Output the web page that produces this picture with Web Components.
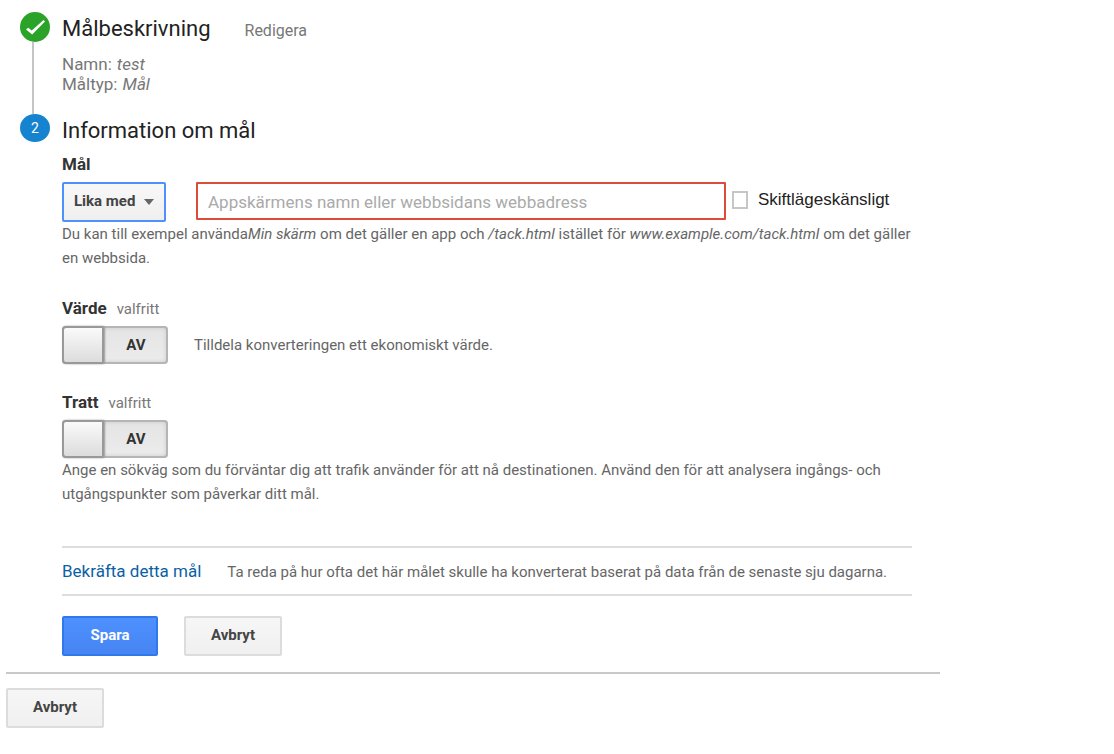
<!DOCTYPE html>
<html lang="sv">
<head>
<meta charset="utf-8">
<meta name="viewport" content="width=device-width, initial-scale=1">
<title>Information om mål</title>
<style>
  body {
    margin: 0;
    padding: 12px 6px;
    background: #fff;
    color: #666;
    font-family: Roboto, "Liberation Sans", sans-serif;
    font-size: 15px;
    line-height: 24px;
  }
</style>
</head>
<body>
<goal-wizard></goal-wizard>

<script>
class GoalStep extends HTMLElement {
  constructor() {
    super();
    this.attachShadow({mode: 'open'});
  }

  connectedCallback() {
    const done = this.hasAttribute('done');
    const tick = `
      <svg viewBox="0 0 30 30" width="30" height="30" role="img" aria-label="Klart">
        <path d="M6 17.500L8.200 15.800L11.800 18.600L23.500 8L25 9.500L12.200 22.600z" fill="#fff"/>
      </svg>`;
    this.shadowRoot.innerHTML = `
      <style>
        :host {
          display: grid;
          grid-template-columns: 30px minmax(0, 850px);
          column-gap: 12px;
          padding: 0 14px;
        }
        .rail {
          display: flex;
          flex-direction: column;
        }
        .marker {
          display: flex;
          align-items: center;
          justify-content: center;
          height: 28px;
          border-radius: 50%;
          background: #1583d0;
          color: #fff;
          font-size: 14px;
        }
        .marker.done {
          height: 30px;
          background: #2ba228;
        }
        .line {
          flex: 1;
          width: 2px;
          margin-left: 12px;
          background: #c4c4c4;
        }
        header {
          display: flex;
          align-items: baseline;
          gap: 34px;
        }
        h2 {
          margin: 0;
          color: #222;
          font-size: 22px;
          font-weight: 400;
          line-height: 34px;
        }
      </style>
      <div class="rail">
        <div class="marker ${done ? 'done' : ''}">${done ? tick : this.getAttribute('number')}</div>
        ${done ? '<div class="line"></div>' : ''}
      </div>
      <section>
        <header>
          <h2>${this.getAttribute('heading')}</h2>
          <slot name="action"></slot>
        </header>
        <slot></slot>
      </section>
    `;
  }
}
customElements.define('goal-step', GoalStep);

class GoalTarget extends HTMLElement {
  constructor() {
    super();
    this.attachShadow({mode: 'open'}).innerHTML = `
      <style>
        * {
          box-sizing: border-box;
        }
        :host {
          display: block;
        }
        .title {
          display: block;
          margin-bottom: 8px;
          color: #333;
          font-size: 17px;
          font-weight: 700;
          line-height: 20px;
        }
        .row {
          display: flex;
          align-items: flex-start;
        }
        .select {
          display: grid;
          flex: none;
          align-items: center;
          width: 104px;
          margin-right: 30px;
        }
        .select > * {
          grid-area: 1 / 1;
        }
        select {
          appearance: none;
          width: 100%;
          height: 40px;
          padding: 0 10px 2px;
          border: 2px solid #4d90fe;
          border-radius: 2px;
          background: linear-gradient(#f8f8f8, #efefef);
          color: #444;
          font: 700 15px Roboto, sans-serif;
        }
        svg {
          justify-self: end;
          margin-right: 12px;
          pointer-events: none;
        }
        input[type="text"] {
          flex: 0 1 530px;
          min-width: 0;
          height: 38px;
          padding: 2px 10px 0;
          border: 2px solid #dd4b39;
          border-radius: 1px;
          font: 17px Roboto, sans-serif;
        }
        input::placeholder {
          color: #aaa;
        }
        .case {
          display: flex;
          align-items: center;
          gap: 10px;
          height: 36px;
          margin-left: 6px;
          color: #222;
          font: 17px "Liberation Sans", sans-serif;
        }
        input[type="checkbox"] {
          appearance: none;
          width: 16px;
          height: 18px;
          margin: 0;
          border: 2px solid #c6c6c6;
        }
      </style>
      <label class="title" for="url">Mål</label>
      <div class="row">
        <div class="select">
          <select aria-label="Matchningstyp">
            <option>Lika med</option>
          </select>
          <svg width="10" height="6" viewBox="0 0 10 6"><path d="M0 0h10L5 6z" fill="#666"/></svg>
        </div>
        <input id="url" type="text" placeholder="Appskärmens namn eller webbsidans webbadress">
        <label class="case"><input type="checkbox">Skiftlägeskänsligt</label>
      </div>
      <slot></slot>
    `;
  }
}
customElements.define('goal-target', GoalTarget);

class ToggleField extends HTMLElement {
  constructor() {
    super();
    this.attachShadow({mode: 'open'});
  }

  connectedCallback() {
    this.shadowRoot.innerHTML = `
      <style>
        * {
          box-sizing: border-box;
        }
        :host {
          display: block;
        }
        .title {
          display: flex;
          align-items: baseline;
          gap: 10px;
          height: 20px;
          margin-bottom: 8px;
          line-height: 20px;
        }
        .title b {
          color: #333;
          font-size: 17px;
        }
        .title span {
          color: #777;
        }
        .row {
          display: flex;
          align-items: center;
          gap: 26px;
        }
        .switch {
          display: grid;
          grid-template-columns: 42px 64px;
          align-items: center;
          flex: none;
          height: 38px;
          border-radius: 4px;
          background: linear-gradient(#e4e4e4, #ececec);
          box-shadow: inset 0 0 0 2px #b5b5b5, inset 0 0 4px 2px #ccc;
          color: #333;
          font-weight: 700;
          text-align: center;
        }
        input {
          appearance: none;
          height: 38px;
          margin: 0;
          border: 2px solid #999;
          border-radius: 4px 2px 2px 4px;
          background: linear-gradient(#fafafa, #dcdcdc);
          box-shadow: 1px 0 2px #999;
        }
      </style>
      <label class="title" for="toggle"><b>${this.getAttribute('label')}</b><span>valfritt</span></label>
      <div class="row">
        <div class="switch">
          <input id="toggle" type="checkbox" role="switch">
          <span>AV</span>
        </div>
        <slot name="aside"></slot>
      </div>
      <slot></slot>
    `;
  }
}
customElements.define('toggle-field', ToggleField);

class PushButton extends HTMLElement {
  constructor() {
    super();
    this.attachShadow({mode: 'open'}).innerHTML = `
      <style>
        :host {
          display: inline-flex;
        }
        button {
          height: 40px;
          padding: 0 25px 2px;
          border: 2px solid #dcdcdc;
          border-radius: 2px;
          background: linear-gradient(#f6f6f6, #f0f0f0);
          color: #444;
          font: 700 15px Roboto, sans-serif;
        }
        :host([primary]) button {
          min-width: 96px;
          border-color: #3079ed;
          background: linear-gradient(#4d90fe, #4685f3);
          color: #fff;
        }
      </style>
      <button type="button"><slot></slot></button>
    `;
  }
}
customElements.define('push-button', PushButton);

class GoalWizard extends HTMLElement {
  constructor() {
    super();
    this.attachShadow({mode: 'open'}).innerHTML = `
      <style>
        :host {
          display: block;
          max-width: 934px;
        }
        p, dl, dd {
          margin: 0;
        }
        .edit {
          color: #777;
          font-size: 16px;
          text-decoration: none;
        }
        .summary {
          padding: 8px 0 20px;
          color: #777;
          font-size: 17px;
          line-height: 20px;
        }
        .summary div {
          display: flex;
          gap: 5px;
        }
        dd {
          font-style: italic;
        }
        goal-target {
          margin: 6px 0 28px;
        }
        .funnel {
          margin: 28px 0 40px;
        }
        .verify {
          display: flex;
          align-items: baseline;
          gap: 26px;
          padding: 11px 0 10px;
          border: solid #ddd;
          border-width: 2px 0;
        }
        .verify a {
          flex: none;
          color: #0b5fa5;
          font-size: 17px;
          text-decoration: none;
        }
        .actions {
          display: flex;
          gap: 26px;
          padding: 20px 0 16px;
        }
        footer {
          padding-top: 14px;
          border-top: 2px solid #c8c8c8;
        }
      </style>
      <goal-step done heading="Målbeskrivning">
        <a class="edit" slot="action" href="#">Redigera</a>
        <dl class="summary">
          <div><dt>Namn:</dt><dd>test</dd></div>
          <div><dt>Måltyp:</dt><dd>Mål</dd></div>
        </dl>
      </goal-step>
      <goal-step number="2" heading="Information om mål">
        <goal-target>
          <p>Du kan till exempel använda<i>Min skärm</i> om det gäller en app och <i>/tack.html</i> istället för <i>www.example.com/tack.html</i> om det gäller en webbsida.</p>
        </goal-target>
        <toggle-field label="Värde">
          <span slot="aside">Tilldela konverteringen ett ekonomiskt värde.</span>
        </toggle-field>
        <toggle-field class="funnel" label="Tratt">
          <p>Ange en sökväg som du förväntar dig att trafik använder för att nå destinationen. Använd den för att analysera ingångs- och utgångspunkter som påverkar ditt mål.</p>
        </toggle-field>
        <div class="verify">
          <a href="#">Bekräfta detta mål</a>
          <span>Ta reda på hur ofta det här målet skulle ha konverterat baserat på data från de senaste sju dagarna.</span>
        </div>
        <div class="actions">
          <push-button primary>Spara</push-button>
          <push-button>Avbryt</push-button>
        </div>
      </goal-step>
      <footer><push-button>Avbryt</push-button></footer>
    `;
  }
}
customElements.define('goal-wizard', GoalWizard);
</script>
</body>
</html>
